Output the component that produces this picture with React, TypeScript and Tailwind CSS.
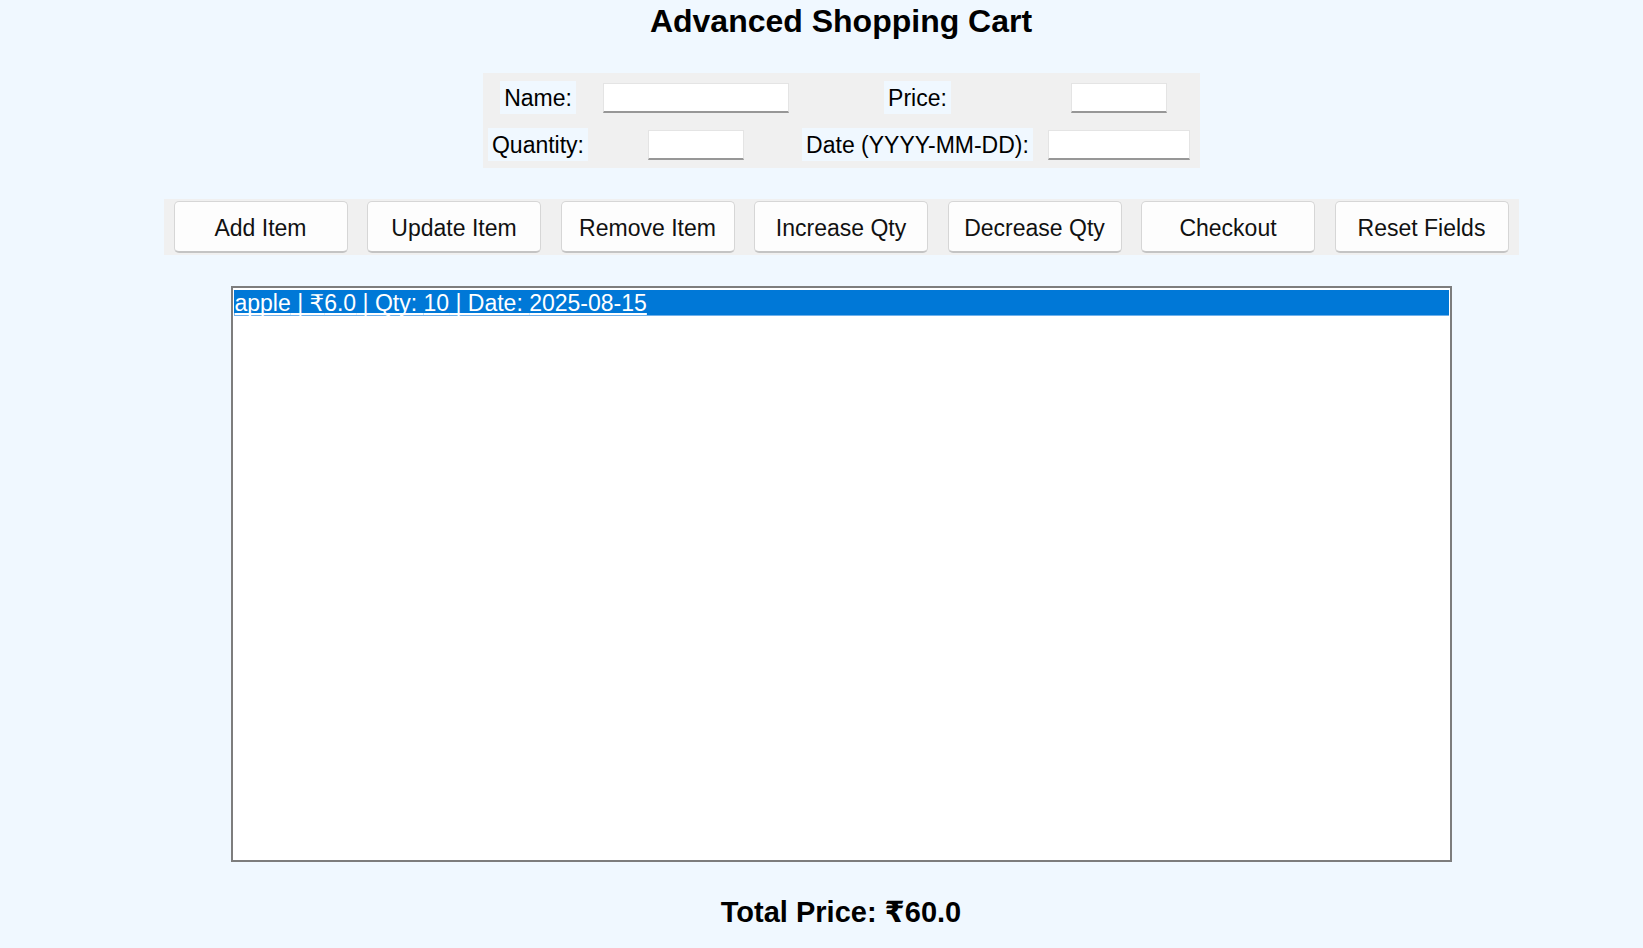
import { useState } from 'react';

interface CartItem {
  name: string;
  price: number;
  qty: number;
  date: string;
}

const BUTTONS = ['Add Item', 'Update Item', 'Remove Item', 'Increase Qty', 'Decrease Qty', 'Checkout', 'Reset Fields'];

const FONT = "font-['Liberation_Sans','DejaVu_Sans',sans-serif]";

const Label = ({ text }: { text: string }) => (
  <span className="h-[33px] px-[4px] pt-[2px] flex items-center bg-[#f0f8ff] text-[23px] leading-[31px] text-black whitespace-nowrap">
    {text}
  </span>
);

const Entry = ({ width }: { width: string }) => (
  <input
    type="text"
    className={`${width} h-[30px] bg-white border border-[#e4e4e4] border-b-2 border-b-[#979797] px-1 text-[20px] outline-none`}
  />
);

const App = () => {
  const [items] = useState<CartItem[]>([{ name: 'apple', price: 6.0, qty: 10, date: '2025-08-15' }]);
  const [selected, setSelected] = useState(0);

  const total = items.reduce((sum, i) => sum + i.price * i.qty, 0);

  return (
    <div className={`min-h-screen w-full bg-[#f0f8ff] ${FONT} text-black overflow-hidden`}>
      <div className="flex flex-col items-center pl-[39px]">
        {/* TITLE */}
        <h1 className="pt-[4px] text-[32px] leading-[35px] font-bold">Advanced Shopping Cart</h1>

        {/* FORM */}
        <div className="mt-[34px] w-[717px] h-[95px] pt-[1px] bg-[#f0f0f0] grid grid-cols-[111px_204px_240px_162px] grid-rows-[47px_47px] items-center justify-items-center">
          <Label text="Name:" />
          <Entry width="w-[186px]" />
          <Label text="Price:" />
          <Entry width="w-[96px]" />
          <Label text="Quantity:" />
          <Entry width="w-[96px]" />
          <Label text="Date (YYYY-MM-DD):" />
          <Entry width="w-[142px]" />
        </div>

        {/* BUTTONS */}
        <div className="mt-[31px] w-[1355px] h-[56px] bg-[#f0f0f0] flex items-center px-[10px] gap-[19.5px]">
          {BUTTONS.map((b) => (
            <button
              key={b}
              className="w-[174px] h-[52px] shrink-0 pt-[3px] rounded-[5px] bg-[#fdfdfd] border border-[#d6d6d6] border-b-2 border-b-[#c4c4c4] text-[23px] text-[#111] cursor-pointer"
            >
              {b}
            </button>
          ))}
        </div>

        {/* LISTBOX */}
        <div className="mt-[31px] w-[1221px] h-[576px] bg-white border-2 border-[#7d7d7d] pt-[2px] px-[1px]">
          {items.map((item, idx) => (
            <div
              key={item.name}
              onClick={() => setSelected(idx)}
              className={
                selected === idx
                  ? 'h-[26px] pt-[1px] bg-[#0078d7] border-b border-[#6fb0ea] text-white underline underline-offset-[2px] [text-decoration-skip-ink:none] text-[23px] leading-[24px] pl-[1px] whitespace-nowrap'
                  : 'h-[26px] pt-[1px] text-[23px] leading-[24px] pl-[1px] whitespace-nowrap'
              }
            >
              {item.name} | ₹{item.price.toFixed(1)} | Qty: {item.qty} | Date: {item.date}
            </div>
          ))}
        </div>

        {/* TOTAL */}
        <p className="mt-[33px] text-[29px] leading-[34px] font-bold">Total Price: ₹{total.toFixed(1)}</p>
      </div>
    </div>
  );
};

export default App;
